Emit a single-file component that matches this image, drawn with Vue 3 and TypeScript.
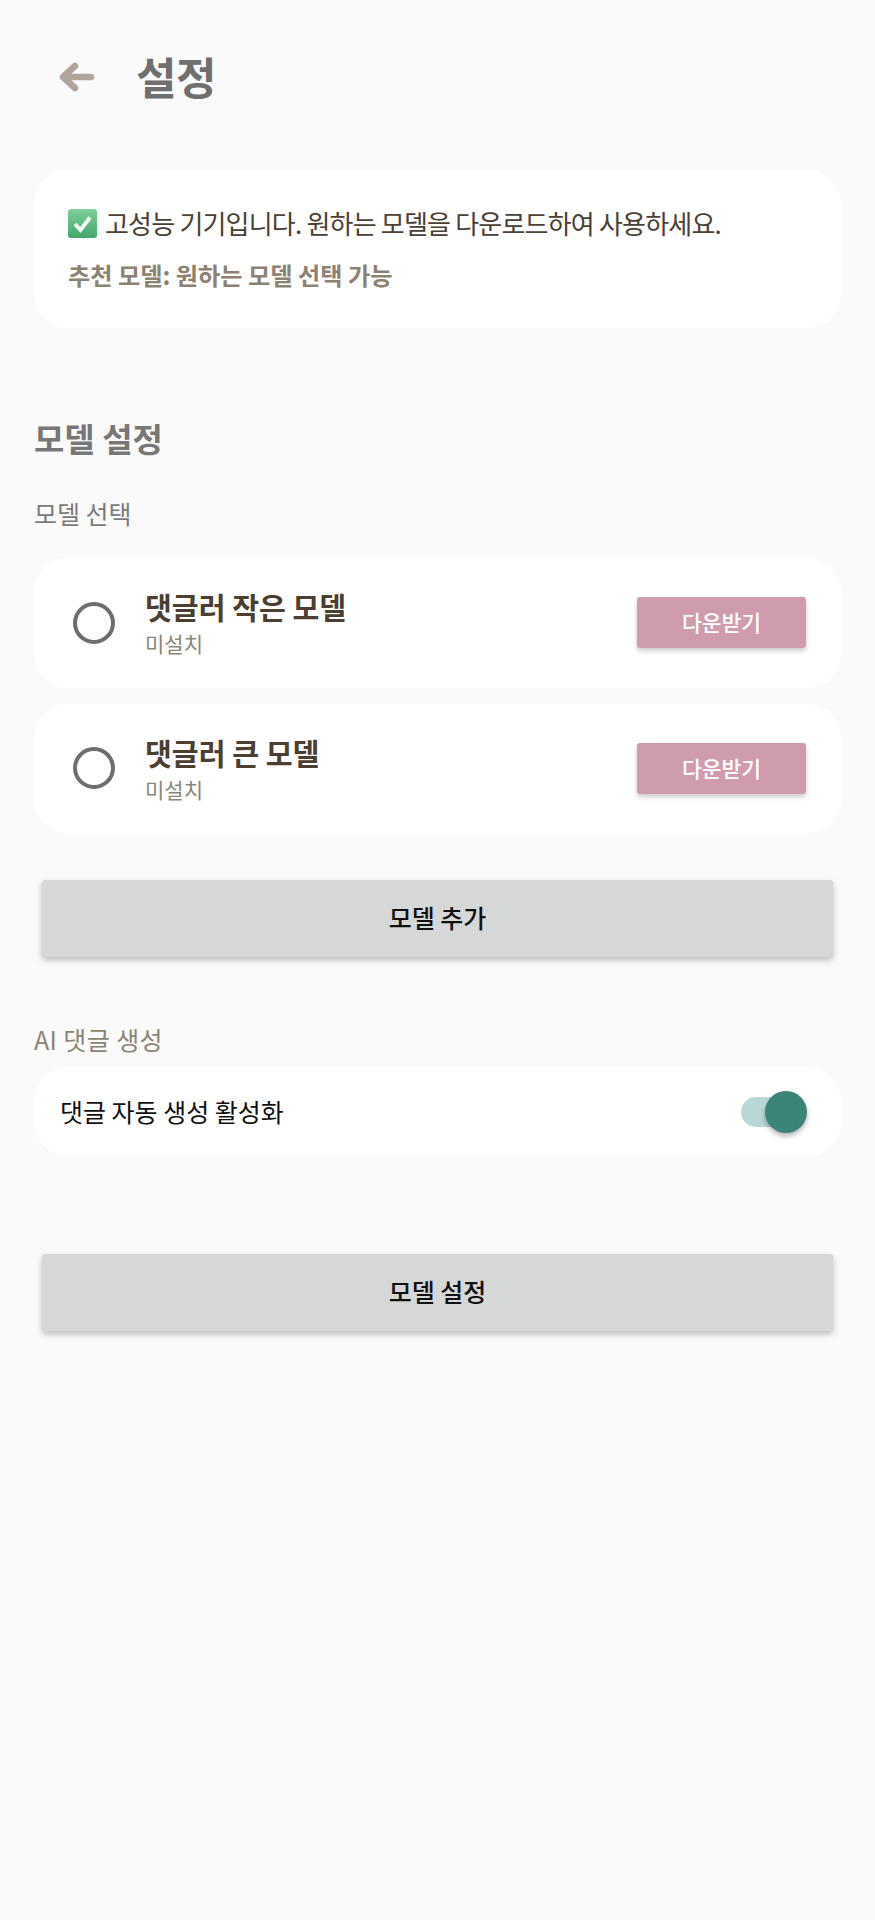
<script setup lang="ts">
interface Model { id: number; name: string; status: string }
const models: Model[] = [
  { id: 1, name: '댓글러 작은 모델', status: '미설치' },
  { id: 2, name: '댓글러 큰 모델', status: '미설치' },
]
</script>

<template>
  <div class="page">
    <header class="header">
      <svg class="back" viewBox="0 0 36 30" width="36" height="30" aria-hidden="true">
        <path d="M32 15H5M16 4 4 15l12 11" fill="none" stroke="#b0a49c" stroke-width="6.5" stroke-linecap="round" stroke-linejoin="round" />
      </svg>
      <h1 class="title">설정</h1>
    </header>

    <section class="card info">
      <p class="info-line">
        <svg class="check" viewBox="0 0 29 29" width="29" height="29" aria-hidden="true">
          <defs>
            <linearGradient id="g" x1="0" y1="0" x2="0" y2="1">
              <stop offset="0" stop-color="#7fd09b" />
              <stop offset="1" stop-color="#44a56c" />
            </linearGradient>
          </defs>
          <rect width="29" height="29" rx="3" fill="url(#g)" />
          <path d="M7 15l5.5 6L22 8.5" fill="none" stroke="#f3f6f1" stroke-width="4" />
        </svg>
        <span>고성능 기기입니다. 원하는 모델을 다운로드하여 사용하세요.</span>
      </p>
      <p class="info-sub">추천 모델: 원하는 모델 선택 가능</p>
    </section>

    <h2 class="section-title">모델 설정</h2>
    <div class="label">모델 선택</div>

    <div class="models">
      <div v-for="m in models" :key="m.id" class="card model">
        <span class="radio"></span>
        <div class="model-text">
          <div class="model-name">{{ m.name }}</div>
          <div class="model-status">{{ m.status }}</div>
        </div>
        <button class="download">다운받기</button>
      </div>
    </div>

    <button class="wide first">모델 추가</button>

    <div class="label ai">AI 댓글 생성</div>
    <div class="card toggle-row">
      <span class="toggle-text">댓글 자동 생성 활성화</span>
      <span class="switch"><span class="thumb"></span></span>
    </div>

    <button class="wide second">모델 설정</button>
  </div>
</template>

<style>
html, body { margin: 0; background: #fafafa; }
</style>

<style scoped>
.page {
  box-sizing: border-box;
  min-height: 1920px;
  padding: 0 34px;
  background: #fafafa;
  font-family: "Noto Sans CJK KR", "Noto Sans", sans-serif;
}
.header {
  display: flex;
  align-items: center;
  height: 154px;
  padding-left: 25px;
  margin-bottom: 16px;
}
.back { flex: none; }
.title {
  margin: 0 0 3px 41px;
  font-size: 44px;
  line-height: 50px;
  font-weight: 700;
  letter-spacing: -0.5px;
  color: #6f6f6f;
}
.card {
  background: #fff;
  border-radius: 34px;
}
.info {
  box-sizing: border-box;
  height: 158px;
  padding: 36px 34px 0;
}
.info-line {
  display: flex;
  align-items: center;
  gap: 8px;
  margin: 0;
  font-size: 26px;
  line-height: 34px;
  letter-spacing: -0.8px;
  color: #4a4034;
}
.check { flex: none; }
.info-sub {
  margin: 18px 0 0;
  font-size: 24.2px;
  line-height: 34px;
  font-weight: 700;
  color: #8c8271;
}
.section-title {
  margin: 92px 0 0;
  font-size: 33px;
  line-height: 36px;
  font-weight: 700;
  color: #777;
}
.label {
  margin-top: 42px;
  font-size: 25px;
  line-height: 30px;
  color: #7a7a7a;
}
.models {
  display: flex;
  flex-direction: column;
  gap: 16px;
  margin-top: 30px;
}
.model {
  box-sizing: border-box;
  display: flex;
  align-items: center;
  height: 129.5px;
  padding: 0 35px 0 39px;
}
.radio {
  flex: none;
  box-sizing: border-box;
  width: 42px;
  height: 42px;
  border: 4.5px solid #6e6e6e;
  border-radius: 50%;
}
.model-text {
  flex: 1;
  margin-left: 30px;
}
.model-name {
  font-size: 29.2px;
  line-height: 36px;
  font-weight: 700;
  color: #4a3f30;
}
.model-status {
  margin-top: 5px;
  font-size: 21px;
  line-height: 28px;
  color: #8c8677;
}
.download {
  flex: none;
  width: 169px;
  height: 51px;
  padding: 0 0 2px;
  border: 0;
  border-radius: 3px;
  background: #cf9cae;
  box-shadow: 0 3px 5px rgba(0, 0, 0, 0.2);
  color: #fff;
  font: 500 21.5px/1 "Noto Sans CJK KR", sans-serif;
}
.wide {
  display: block;
  box-sizing: border-box;
  width: 791px;
  height: 77px;
  margin-left: 8px;
  padding: 0 0 2px;
  border: 0;
  border-radius: 3px;
  background: #d6d7d7;
  box-shadow: 0 3px 6px rgba(0, 0, 0, 0.25);
  color: #111;
  font: 500 25px/1 "Noto Sans CJK KR", sans-serif;
}
.first { margin-top: 47px; }
.second { margin-top: 98px; }
.ai {
  margin-top: 67px;
  letter-spacing: 0.4px;
  color: #8c8475;
}
.toggle-row {
  box-sizing: border-box;
  display: flex;
  align-items: center;
  justify-content: space-between;
  height: 89px;
  margin-top: 13px;
  padding: 0 42px 0 26px;
}
.toggle-text {
  margin-bottom: 2px;
  font-size: 25px;
  line-height: 34px;
  color: #111;
}
.switch {
  position: relative;
  display: block;
  width: 58px;
  height: 30px;
  border-radius: 15px;
  background: #b9d8d5;
}
.thumb {
  position: absolute;
  top: -6px;
  right: -8px;
  width: 42px;
  height: 42px;
  border-radius: 50%;
  background: #3a8478;
  box-shadow: 0 3px 5px rgba(0, 0, 0, 0.3);
}
</style>
